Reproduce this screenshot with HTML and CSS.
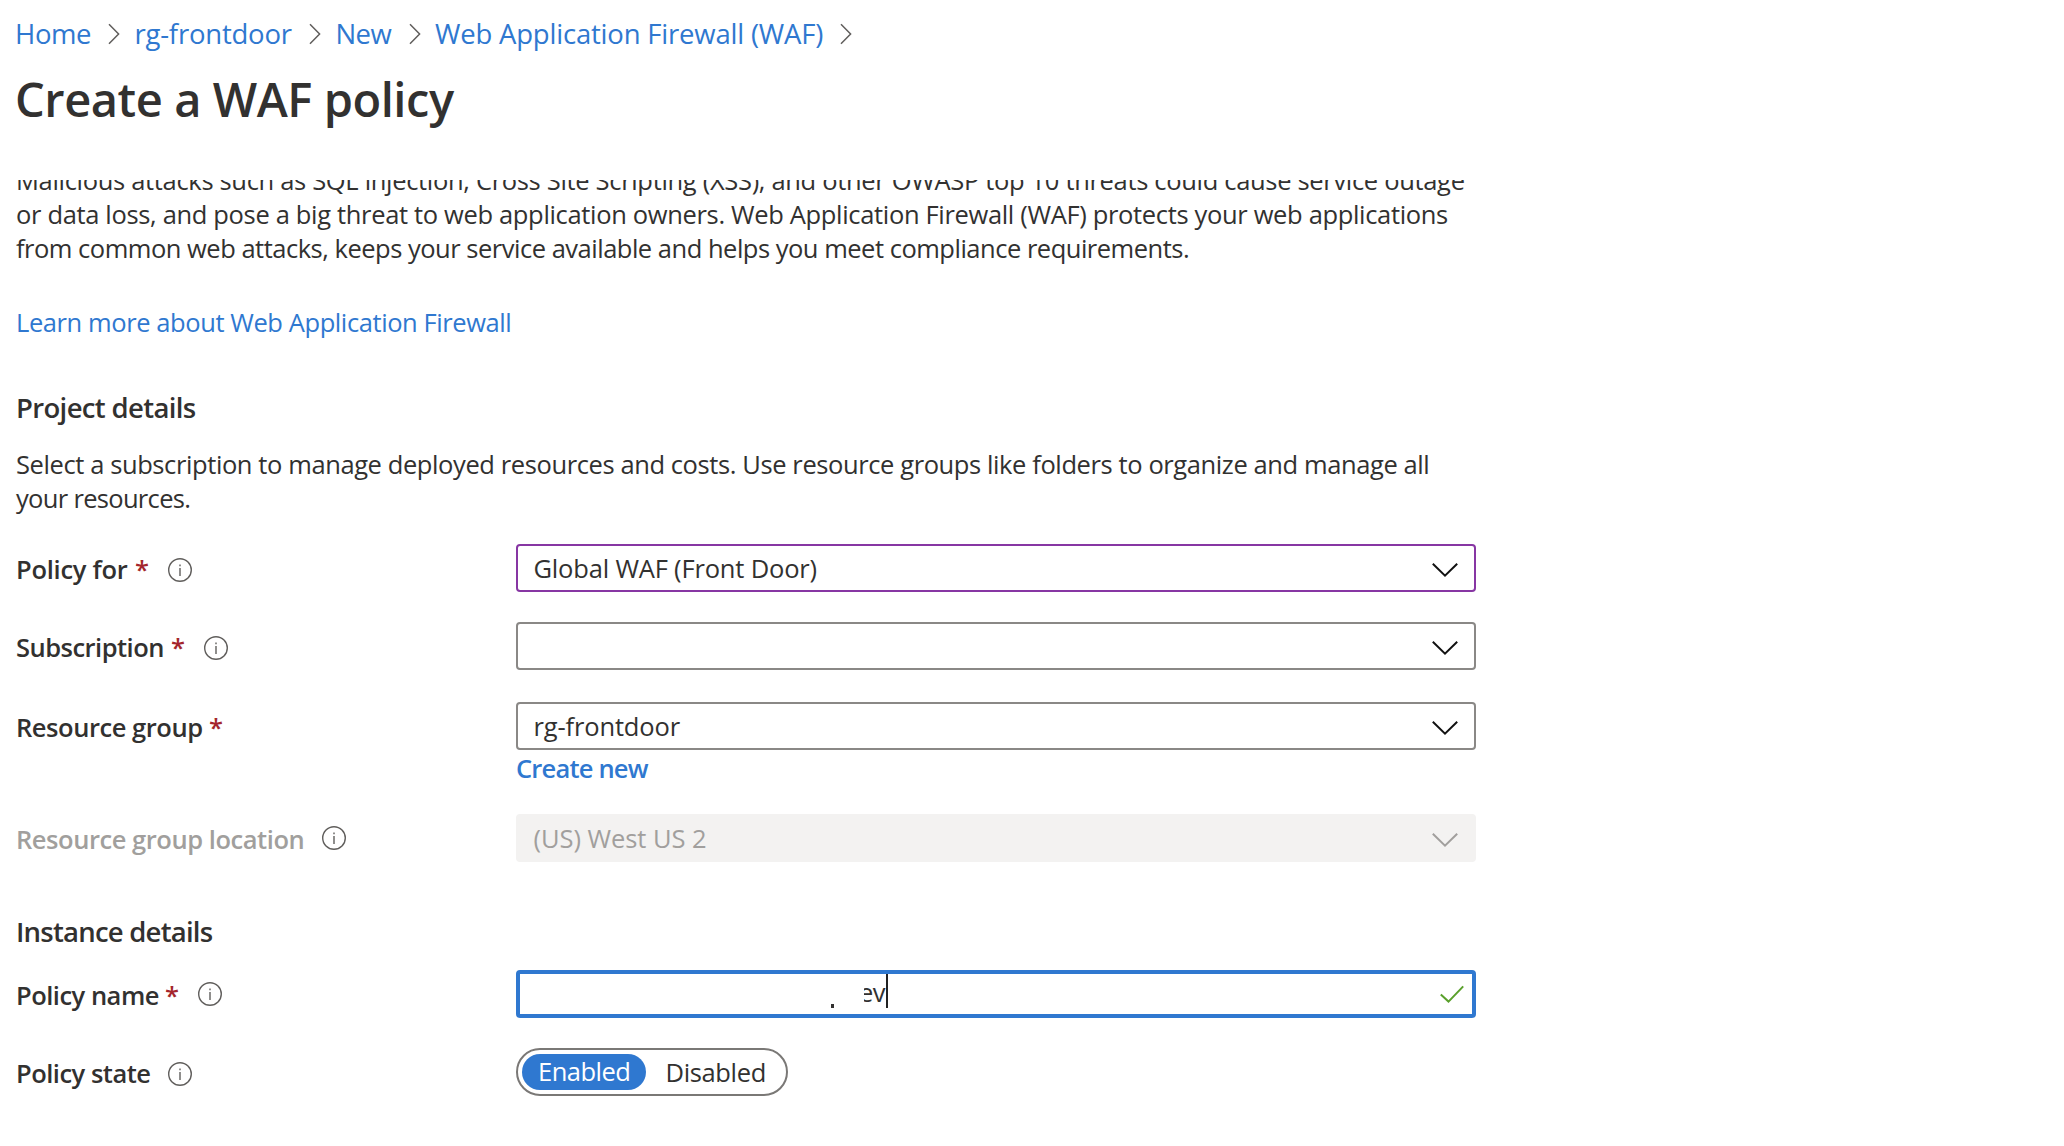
FILE: index.html
```html
<!DOCTYPE html>
<html lang="en">
<head>
<meta charset="utf-8">
<title>Create a WAF policy</title>
<link rel="stylesheet" href="styles.css">
</head>
<body>
<svg class="sprite" aria-hidden="true">
  <symbol id="sep" viewBox="0 0 12 22"><path d="M1 1.2 10.6 11 1 20.8" fill="none" stroke="currentColor" stroke-width="1.5"/></symbol>
  <symbol id="info" viewBox="0 0 24 24"><circle cx="12" cy="12" r="11.3" fill="none" stroke="currentColor" stroke-width="1.4"/><path d="M12 10v8M12 6.4v1.8" stroke="currentColor" stroke-width="1.4"/></symbol>
  <symbol id="down" viewBox="0 0 26 16"><path d="M.8 1.8 13 13.6 25.2 1.8" fill="none" stroke="currentColor" stroke-width="2"/></symbol>
  <symbol id="check" viewBox="0 0 24 18"><path d="M.8 9.4 8.5 16.6 23.2 1.4" fill="none" stroke="currentColor" stroke-width="2"/></symbol>
</svg>
<header class="header">
  <nav class="crumbs">
    <a class="home">Home</a><svg class="sep"><use href="#sep"/></svg>
    <a class="group">rg-frontdoor</a><svg class="sep"><use href="#sep"/></svg>
    <a class="new">New</a><svg class="sep"><use href="#sep"/></svg>
    <a class="waf">Web Application Firewall (WAF)</a><svg class="sep"><use href="#sep"/></svg>
  </nav>
  <h1 class="title">Create a WAF policy</h1>
</header>
<main class="pane">
  <div class="scroll">
    <p class="text">
      <span class="line l1">Malicious attacks such as SQL injection, Cross Site Scripting (XSS), and other OWASP top 10 threats could cause service outage</span>
      <span class="line l2">or data loss, and pose a big threat to web application owners. Web Application Firewall (WAF) protects your web applications</span>
      <span class="line l3">from common web attacks, keeps your service available and helps you meet compliance requirements.</span>
    </p>
    <a class="learn">Learn more about Web Application Firewall</a>
    <h2 class="section project">Project details</h2>
    <p class="text">
      <span class="line l4">Select a subscription to manage deployed resources and costs. Use resource groups like folders to organize and manage all</span>
      <span class="line l5">your resources.</span>
    </p>
    <div class="form">
      <div class="row">
        <div class="label"><span class="name for">Policy for</span><span class="star">*</span><svg class="info"><use href="#info"/></svg></div>
        <div class="select changed"><span class="value global">Global WAF (Front Door)</span><svg class="down"><use href="#down"/></svg></div>
      </div>
      <div class="row second">
        <div class="label"><span class="name sub">Subscription</span><span class="star">*</span><svg class="info"><use href="#info"/></svg></div>
        <div class="select"><span class="value"></span><svg class="down"><use href="#down"/></svg></div>
      </div>
      <div class="row third">
        <div class="label"><span class="name rg">Resource group</span><span class="star">*</span></div>
        <div class="select"><span class="value rgv">rg-frontdoor</span><svg class="down"><use href="#down"/></svg></div>
      </div>
      <a class="create">Create new</a>
      <div class="row fourth">
        <div class="label disabled"><span class="name loc">Resource group location</span><svg class="info raised"><use href="#info"/></svg></div>
        <div class="select off"><span class="value">(US) West US 2</span><svg class="down"><use href="#down"/></svg></div>
      </div>
    </div>
    <h2 class="section instance">Instance details</h2>
    <div class="form second-form">
      <div class="row">
        <div class="label"><span class="name pname">Policy name</span><span class="star">*</span><svg class="info raised"><use href="#info"/></svg></div>
        <div class="input"><i class="speck"></i><span class="visible"><span class="typed">ev</span></span><i class="caret"></i><svg class="check"><use href="#check"/></svg></div>
      </div>
      <div class="row state">
        <div class="label"><span class="name pstate">Policy state</span><svg class="info"><use href="#info"/></svg></div>
        <div class="toggle"><span class="on">Enabled</span><span class="offopt">Disabled</span></div>
      </div>
    </div>
  </div>
</main>
</body>
</html>
```
FILE: styles.css
```css
* { box-sizing: border-box; }
body {
  margin: 0;
  height: 1146px;
  overflow: hidden;
  background: #fff;
  color: #323130;
  font: 25.5px/34px "Open Sans", "Noto Sans", sans-serif;
  white-space: nowrap;
}
h1, h2, p { margin: 0; }
svg { display: block; flex: none; }
.sprite { display: none; }

.header { height: 180px; padding: 17px 15px 0; }
.crumbs { display: flex; align-items: center; height: 34px; font-size: 27.5px; color: #2f78d0; }
.sep { width: 12px; height: 22px; color: #605e5c; }
.home { width: 93px; letter-spacing: -.4px; }
.group { width: 174.5px; margin-left: 14.5px; letter-spacing: -.22px; }
.new { width: 73px; margin-left: 14.5px; letter-spacing: -.6px; }
.waf { width: 404.5px; margin-left: 14.5px; letter-spacing: -.2px; }
.title { margin: 18px 0 0; font-size: 47px; line-height: 60px; font-weight: 600; letter-spacing: -.45px; }

/* The form is scrolled a little, so its first line is cut off */
.pane { height: 966px; overflow: hidden; padding-left: 16px; }
.scroll { margin-top: -17px; display: flex; flex-direction: column; align-items: flex-start; }
.line { display: block; }
.l1 { letter-spacing: -.32px; }
.l2 { letter-spacing: -.335px; }
.l3 { letter-spacing: -.49px; }
.l4 { letter-spacing: -.4px; }
.l5 { letter-spacing: -.68px; }
.learn { margin-top: 40px; color: #2f78d0; letter-spacing: -.41px; }
.section { font-size: 27.5px; line-height: 34px; font-weight: 600; }
.project { margin: 52px 0 22px; letter-spacing: -.65px; }
.instance { margin-top: 53px; letter-spacing: -.77px; }

.form { margin-top: 29px; }
.second-form { margin-top: 21px; }
.row { display: grid; grid-template-columns: 500px 960px; height: 48px; }
.second { margin-top: 30px; }
.third { margin-top: 32px; }
.fourth { margin-top: 29px; }
.state { margin-top: 30px; }
.label { display: flex; align-items: flex-start; padding-top: 8px; font-weight: 600; }
.disabled { color: #a19f9d; }
.for { width: 112px; letter-spacing: -.27px; }
.sub { width: 148px; letter-spacing: -.52px; }
.rg { width: 186px; letter-spacing: -.45px; }
.loc { width: 287px; letter-spacing: -.45px; }
.pname { width: 142px; letter-spacing: -.5px; }
.pstate { width: 133px; letter-spacing: -.5px; }
.star { width: 14px; margin-left: 7px; color: #a4262c; }
.info { width: 24px; height: 24px; margin: 6px 0 0 19px; color: #605e5c; }
.raised { margin-top: 4px; }

.select { display: flex; align-items: center; justify-content: space-between; border: 2px solid #8a8886; border-radius: 4px; padding: 0 16px 0 15.5px; }
.changed { border-color: #8736a3; }
.off { background: #f3f2f1; border-color: #f3f2f1; color: #a19f9d; }
.down { width: 26px; height: 16px; color: #111; margin-top: 3px; }
.off .down { color: #a19f9d; }
.value { letter-spacing: -.05px; }
.global { letter-spacing: -.18px; }
.rgv { letter-spacing: -.15px; }
.create { display: block; margin: 1px 0 0 500px; color: #2f78d0; font-weight: 600; letter-spacing: -.8px; }

/* Focused field; only the last characters of the name are visible */
.input { display: flex; align-items: flex-start; border: 4px solid #2f78d0; border-radius: 4px; }
.speck { width: 3px; height: 4px; margin: 30px 30px 0 311px; background: #323130; }
.visible { width: 22px; height: 36px; overflow: hidden; }
.typed { display: block; margin: 1px 0 0 -5px; letter-spacing: -.6px; }
.caret { width: 2px; height: 34px; background: #222; }
.check { width: 24px; height: 18px; margin: 11px 8px 0 auto; color: #5aa02c; }

.toggle { display: flex; align-items: center; width: 272px; border: 2px solid #7a7876; border-radius: 24px; padding: 0 4px; }
.on { width: 124px; height: 36px; padding-left: 16px; border-radius: 18px; background: #2f78d0; color: #fff; letter-spacing: -.5px; }
.offopt { margin-left: 19.5px; letter-spacing: -.35px; }
```
